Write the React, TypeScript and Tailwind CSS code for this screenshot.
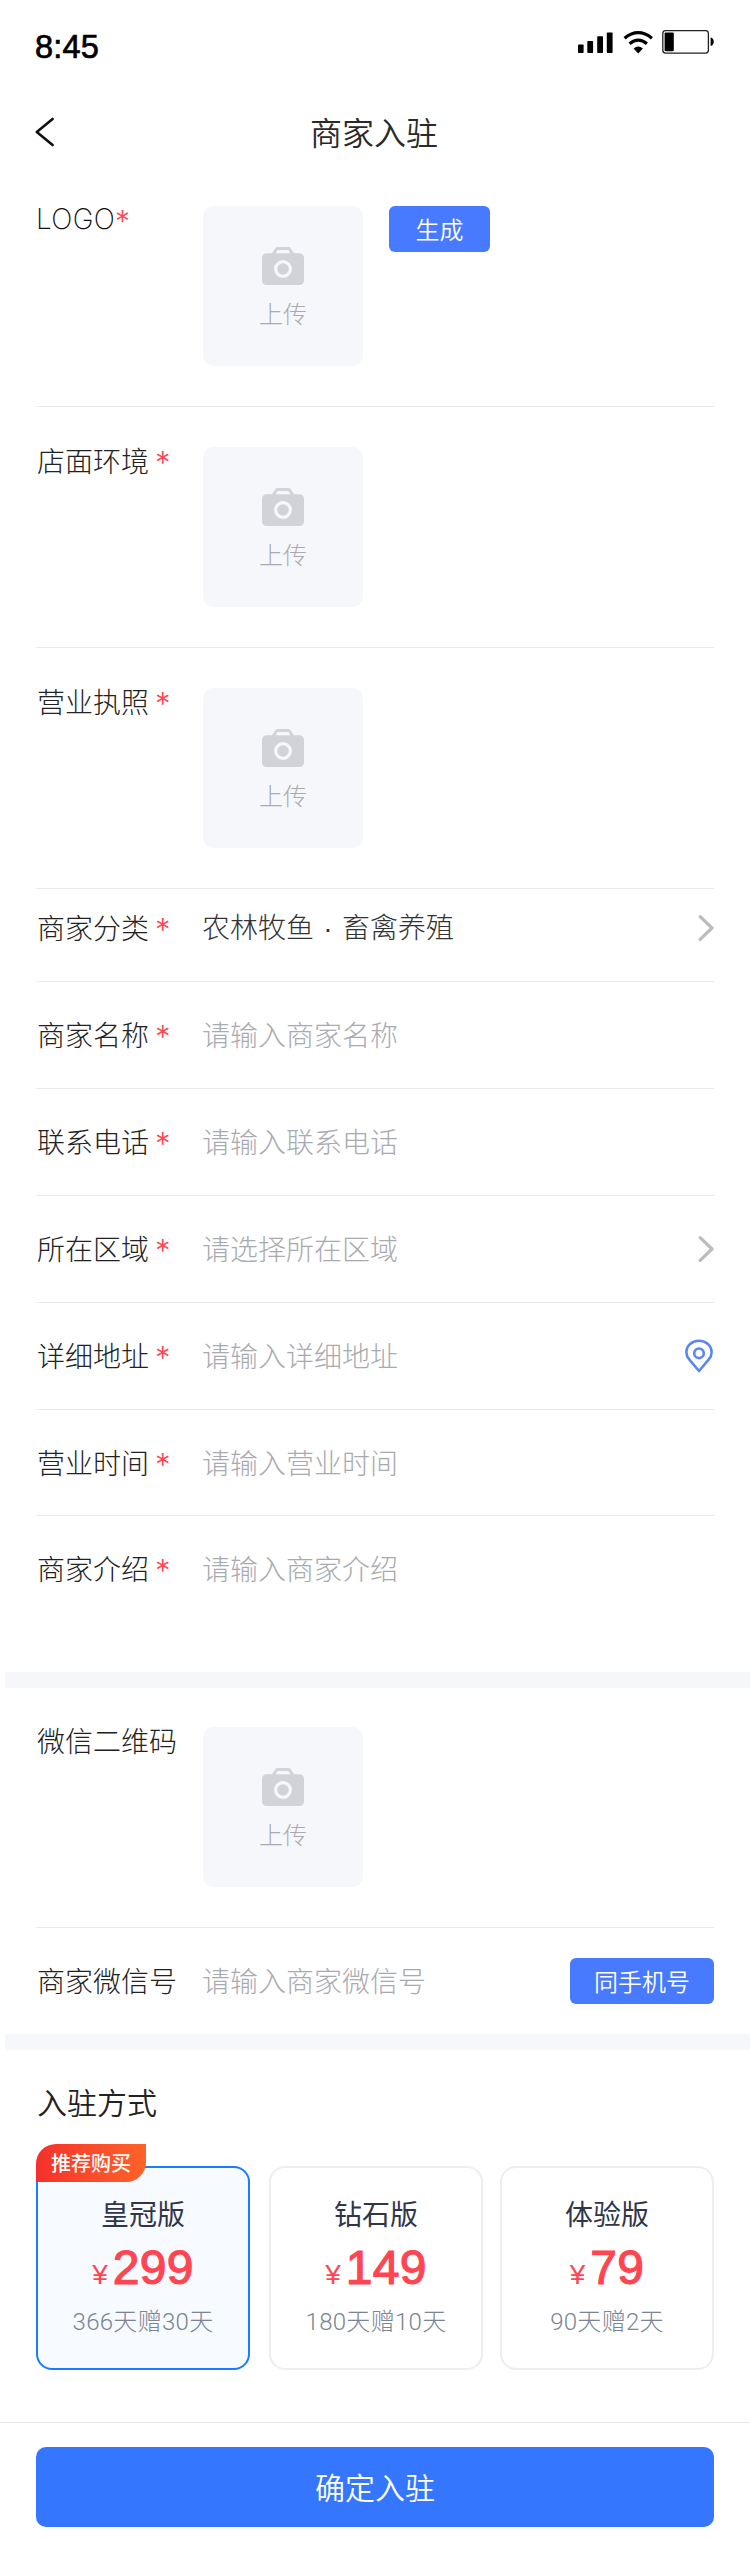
import clsx from "clsx";
import type { ReactNode } from "react";

type Field = {
  label: string;
  value?: ReactNode;
  placeholder?: string;
  icon?: "arrow" | "pin";
  height: string;
};

type Plan = {
  name: string;
  price: string;
  desc: string;
  badge?: string;
  className?: string;
};

const uploads = ["店面环境", "营业执照"];

const category = (
  <>
    农林牧鱼<span className="inline-block w-7 text-center font-['Liberation_Sans',sans-serif]">·</span>畜禽养殖
  </>
);

const fields: Field[] = [
  { label: "商家分类", value: category, icon: "arrow", height: "h-[93px] pb-[14px]" },
  { label: "商家名称", placeholder: "请输入商家名称", height: "h-[107px]" },
  { label: "联系电话", placeholder: "请输入联系电话", height: "h-[107px]" },
  { label: "所在区域", placeholder: "请选择所在区域", icon: "arrow", height: "h-[107px]" },
  { label: "详细地址", placeholder: "请输入详细地址", icon: "pin", height: "h-[107px]" },
  { label: "营业时间", placeholder: "请输入营业时间", height: "h-[106px]" },
];

const plans: Plan[] = [
  { name: "皇冠版", price: "299", desc: "366天赠30天", badge: "推荐购买" },
  { name: "钻石版", price: "149", desc: "180天赠10天", className: "ml-0.5" },
  { name: "体验版", price: "79", desc: "90天赠2天" },
];

function StatusBar() {
  return (
    <div className="flex h-[94px] items-start justify-between pr-9 pl-[35px]">
      <span className="mt-[31px] font-['Liberation_Sans',sans-serif] text-[32.5px] leading-8 tracking-[0.2px] text-black [-webkit-text-stroke:0.7px_#000]">
        8:45
      </span>
      <svg className="mt-[28px]" width="138" height="28" viewBox="576 28 138 28">
        <rect x="578" y="44.5" width="5.6" height="8.5" rx="0.8" />
        <rect x="587.3" y="41" width="5.8" height="12" rx="0.8" />
        <rect x="597.2" y="36.2" width="5.8" height="16.8" rx="0.8" />
        <rect x="606.8" y="32.5" width="5.8" height="20.5" rx="0.8" />
        <g fill="none" stroke="#000" strokeWidth="3.2">
          <path d="M624.6 38.2Q638.2 27.2 651.9 38.2" />
          <path d="M629.6 43.8Q638.2 36.6 646.9 43.8" />
        </g>
        <path d="M633.6 48.6Q638.2 44.6 642.9 48.6L638.2 53.4Z" />
        <rect x="662.8" y="30.7" width="45.6" height="22.4" rx="2.8" fill="none" stroke="#222" strokeWidth="1.3" />
        <rect x="664.6" y="32.4" width="9.2" height="18.8" rx="1.2" />
        <path d="M710.6 37.6C714.8 38 714.8 45.6 710.6 46Z" />
      </svg>
    </div>
  );
}

function NavBar() {
  return (
    <div className="grid h-[72px] grid-cols-[1fr_auto_1fr] items-center pr-9 pl-[34px]">
      <svg width="20" height="30" viewBox="0 0 20 30" fill="none" className="mt-1 ml-px">
        <path d="M17.6 2L1.8 15L17.6 28" stroke="#111" strokeWidth="2.6" strokeLinecap="round" strokeLinejoin="round" />
      </svg>
      <h1 className="mt-px text-[32px] leading-[38px] font-[350] text-[#2a2a2a]">商家入驻</h1>
    </div>
  );
}

function CameraIcon() {
  return (
    <svg width="42" height="38" viewBox="0 0 42 38">
      <path
        fill="#d2d3d8"
        fillRule="evenodd"
        d="M10 6.3L13.2 1.4Q14.1 0 15.8 0H26.2Q27.9 0 28.8 1.4L32 6.3H37.5A4.5 4.5 0 0 1 42 10.8V33.5A4.5 4.5 0 0 1 37.5 38H4.5A4.5 4.5 0 0 1 0 33.5V10.8A4.5 4.5 0 0 1 4.5 6.3ZM13.6 6.3H28.4L26.4 3H15.6Z"
      />
      <circle cx="21" cy="22" r="7.4" fill="none" stroke="#f6f7fb" strokeWidth="3.2" />
    </svg>
  );
}

function ArrowIcon() {
  return (
    <svg width="16" height="28" viewBox="0 0 16 28" fill="none">
      <path d="M2.2 2.6L14 14L2.2 25.4" stroke="#bcbcbc" strokeWidth="3.2" strokeLinecap="round" strokeLinejoin="round" />
    </svg>
  );
}

function PinIcon() {
  return (
    <svg width="28" height="34" viewBox="0 0 28 34" fill="none" stroke="#5b86f2" strokeWidth="2.6" className="mr-px">
      <path d="M14 32L4.4 20.6C2.4 18.2 1.4 16 1.4 13.4C1.4 6.6 7 1.8 14 1.8S26.6 6.6 26.6 13.4C26.6 16 25.6 18.2 23.6 20.6Z" strokeLinejoin="round" />
      <circle cx="14" cy="14.3" r="4.8" />
    </svg>
  );
}

function Label({ text, required = true }: { text: string; required?: boolean }) {
  return (
    <div className="-mt-0.5 flex h-7 w-[167px] shrink-0 pl-px text-[28px] leading-7 text-[#222]">
      <span>{text}</span>
      {required && <span className="mt-[3px] ml-1.5 font-['Inter',sans-serif] text-[31px] text-[#ff4552]">*</span>}
    </div>
  );
}

function UploadBox() {
  return (
    <div className="flex size-40 flex-col items-center rounded-[10px] bg-[#f6f7fb] pt-[41px]">
      <CameraIcon />
      <span className="mt-4 text-2xl leading-6 text-[#aaabaf]">上传</span>
    </div>
  );
}

function PlanCard({ name, price, desc, badge, className }: Plan) {
  return (
    <div
      className={clsx(
        "relative flex h-[204px] w-[214px] flex-col items-center rounded-2xl border-2 pt-[31px]",
        badge ? "border-[#1a7dff] bg-[#f7faff]" : "border-[#ededf2] bg-white",
        className
      )}
    >
      {badge && (
        <span className="absolute -top-6 -left-0.5 flex h-[38px] w-[110px] items-center justify-center rounded-tl-[20px] rounded-br-[20px] bg-linear-to-r from-[#f42f2c] to-[#ff6229] text-xl leading-5 font-medium text-white">
          {badge}
        </span>
      )}
      <span className="text-[28px] leading-7 font-normal text-[#30354a]">{name}</span>
      <div className="mt-[17px] flex h-[50px] items-baseline font-['Liberation_Sans',sans-serif] text-[#ff4552]">
        <span className="mr-[5px] text-[28px]">¥</span>
        <span className="text-5xl tracking-[0.3px] [-webkit-text-stroke:1.2px_#ff4552]">{price}</span>
      </div>
      <span className="mt-4 font-['Roboto','Noto_Sans_CJK_SC',sans-serif] text-2xl leading-6 tracking-[0.3px] text-[#7b8494]">
        {desc}
      </span>
    </div>
  );
}

export default function App() {
  return (
    <div className="flex h-[2551px] w-[750px] flex-col bg-white font-['Noto_Sans_CJK_SC',sans-serif] font-light">
      <StatusBar />
      <NavBar />

      <section className="px-9">
        <div className="flex h-[241px] items-start border-b border-[#ebebeb] pt-10">
          <div className="-mt-px flex h-7 w-[167px] font-['Inter',sans-serif] text-[28px] leading-7 font-extralight tracking-[0.3px] text-[#111]">
            LOGO<span className="mt-0.5 text-[30px] font-light text-[#ff4552]">*</span>
          </div>
          <UploadBox />
          <button className="ml-[26px] h-[46px] w-[101px] rounded-md bg-[#477aff] text-2xl leading-6 font-[350] text-white">
            生成
          </button>
        </div>
        {uploads.map((label) => (
          <div key={label} className="flex h-[241px] items-start border-b border-[#ebebeb] pt-[41px]">
            <Label text={label} />
            <div className="-mt-px">
              <UploadBox />
            </div>
          </div>
        ))}
        {fields.map(({ label, value, placeholder, icon, height }) => (
          <div key={label} className={clsx("flex items-center border-b border-[#ebebeb]", height)}>
            <Label text={label} />
            <span className={clsx("-mt-0.5 -ml-px flex-1 text-[28px] leading-7", value ? "text-[#333]" : "text-[#a9aab0]")}>
              {value ?? placeholder}
            </span>
            {icon === "arrow" && <ArrowIcon />}
            {icon === "pin" && <PinIcon />}
          </div>
        ))}
        <div className="flex h-[156px] items-start pt-10">
          <Label text="商家介绍" />
          <span className="-mt-0.5 -ml-px text-[28px] leading-7 text-[#a9aab0]">请输入商家介绍</span>
        </div>
      </section>

      <div className="ml-[5px] h-4 bg-[#f6f7fb]" />

      <section className="px-9">
        <div className="flex h-60 items-start border-b border-[#ebebeb] pt-10">
          <Label text="微信二维码" required={false} />
          <div className="-mt-px">
            <UploadBox />
          </div>
        </div>
        <div className="flex h-[106px] items-center">
          <Label text="商家微信号" required={false} />
          <span className="-mt-0.5 -ml-px flex-1 text-[28px] leading-7 text-[#a9aab0]">请输入商家微信号</span>
          <button className="h-[46px] w-36 rounded-md bg-[#477aff] text-2xl leading-6 font-[350] text-white">
            同手机号
          </button>
        </div>
      </section>

      <div className="ml-[5px] h-4 bg-[#f6f7fb]" />

      <section className="px-9 pt-9">
        <h2 className="pl-px text-[30px] leading-[30px] font-[350] text-[#222]">入驻方式</h2>
        <div className="mt-[50px] flex justify-between">
          {plans.map((plan) => (
            <PlanCard key={plan.name} {...plan} />
          ))}
        </div>
      </section>

      <footer className="mt-[52px] border-t border-[#ebebeb] px-9 pt-6">
        <button className="h-20 w-full rounded-[10px] bg-[#3576ff] pb-0.5 text-[30px] leading-[30px] font-[350] text-white">
          确定入驻
        </button>
      </footer>
    </div>
  );
}
